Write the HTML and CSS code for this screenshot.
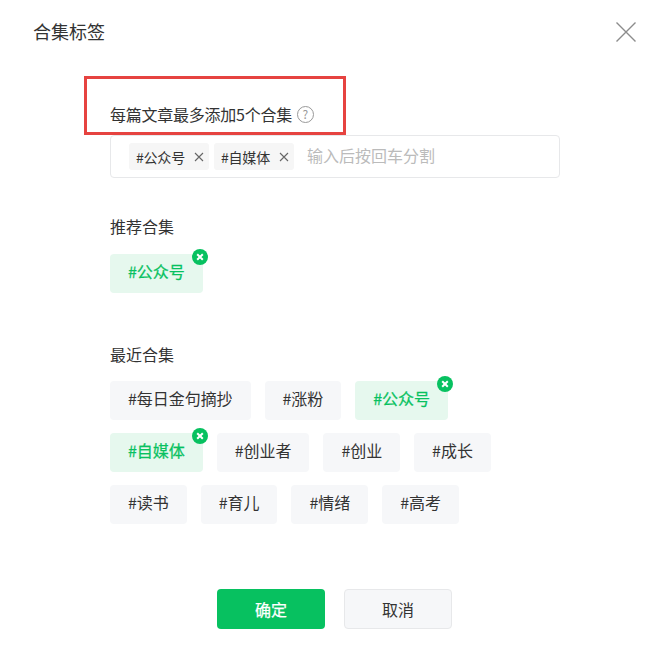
FILE: index.html
```html
<!DOCTYPE html>
<html lang="zh-CN">

<head>
    <meta charset="UTF-8">
    <title>合集标签</title>
    <link rel="stylesheet" href="styles.css">
</head>

<body>
    <div class="dialog">
        <div class="dialog-header">
            <span class="dialog-title">合集标签</span>
            <svg class="dialog-close" width="20" height="20" viewBox="0 0 20 20">
                <path d="M0.5 0.5L19.5 19.5M19.5 0.5L0.5 19.5" stroke="#8c8c8c" stroke-width="1.4" fill="none"/>
            </svg>
        </div>

        <div class="dialog-body">
            <div class="limit-row">
                <span class="limit-text">每篇文章最多添加5个合集</span>
                <span class="help-icon">?</span>
            </div>

            <div class="tag-input">
                <span class="chip">#公众号
                    <svg class="chip-remove" width="10" height="10" viewBox="0 0 10 10">
                        <path d="M1 1L9 9M9 1L1 9" stroke="#666" stroke-width="1.1" fill="none"/>
                    </svg>
                </span>
                <span class="chip">#自媒体
                    <svg class="chip-remove" width="10" height="10" viewBox="0 0 10 10">
                        <path d="M1 1L9 9M9 1L1 9" stroke="#666" stroke-width="1.1" fill="none"/>
                    </svg>
                </span>
                <span class="tag-input-placeholder">输入后按回车分割</span>
            </div>

            <div class="section-title section-recommend">推荐合集</div>
            <div class="tag-list">
                <span class="tag tag-active">#公众号
                    <svg class="tag-badge" width="16" height="16" viewBox="0 0 16 16">
                        <circle cx="8" cy="8" r="8" fill="#07c160"/>
                        <path d="M5.2 5.2L10.8 10.8M10.8 5.2L5.2 10.8" stroke="#fff" stroke-width="2" fill="none"/>
                    </svg>
                </span>
            </div>

            <div class="section-title section-recent">最近合集</div>
            <div class="tag-list">
                <span class="tag">#每日金句摘抄</span>
                <span class="tag">#涨粉</span>
                <span class="tag tag-active">#公众号
                    <svg class="tag-badge" width="16" height="16" viewBox="0 0 16 16">
                        <circle cx="8" cy="8" r="8" fill="#07c160"/>
                        <path d="M5.2 5.2L10.8 10.8M10.8 5.2L5.2 10.8" stroke="#fff" stroke-width="2" fill="none"/>
                    </svg>
                </span>
                <span class="tag tag-active">#自媒体
                    <svg class="tag-badge" width="16" height="16" viewBox="0 0 16 16">
                        <circle cx="8" cy="8" r="8" fill="#07c160"/>
                        <path d="M5.2 5.2L10.8 10.8M10.8 5.2L5.2 10.8" stroke="#fff" stroke-width="2" fill="none"/>
                    </svg>
                </span>
                <span class="tag">#创业者</span>
                <span class="tag">#创业</span>
                <span class="tag">#成长</span>
                <span class="tag">#读书</span>
                <span class="tag">#育儿</span>
                <span class="tag">#情绪</span>
                <span class="tag">#高考</span>
            </div>
        </div>

        <div class="dialog-footer">
            <span class="btn btn-primary">确定</span>
            <span class="btn btn-default">取消</span>
        </div>

        <div class="highlight-box"></div>
    </div>
</body>

</html>
```

FILE: styles.css
```css
body {
    margin: 0;
    background: #fff;
    color: #333;
    font-family: "Noto Sans CJK SC", "Noto Sans", sans-serif;
    font-size: 16px;
    line-height: 24px;
}

.dialog {
    position: relative;
    width: 653px;
    height: 657px;
    overflow: hidden;
}

.dialog-header {
    display: flex;
    justify-content: space-between;
    align-items: center;
    height: 24px;
    padding: 20px 17px 0 33px;
}

.dialog-title {
    align-self: flex-start;
    font-size: 18px;
    line-height: 22px;
}

.dialog-body {
    margin-left: 110px;
    width: 450px;
}

.limit-row {
    display: flex;
    align-items: center;
    margin-top: 58px;
}

.limit-text {
    letter-spacing: -0.25px;
}

.help-icon {
    display: flex;
    justify-content: center;
    align-items: center;
    box-sizing: border-box;
    width: 17px;
    height: 17px;
    margin-left: 5px;
    border: 1.3px solid #999;
    border-radius: 50%;
    color: #999;
    font-size: 12px;
    line-height: 14px;
}

.tag-input {
    display: flex;
    align-items: center;
    box-sizing: border-box;
    height: 43px;
    margin-top: 9px;
    padding-left: 18px;
    border: 1px solid #e7e8ea;
    border-radius: 4px;
}

.chip {
    display: flex;
    align-items: center;
    width: 80px;
    box-sizing: border-box;
    height: 27px;
    margin-right: 5px;
    padding: 0 5px 0 7px;
    background: #f6f6f6;
    border-radius: 3px;
    font-size: 14px;
    line-height: 24px;
    letter-spacing: -0.2px;
}

.chip-remove {
    margin-left: auto;
}

.tag-input-placeholder {
    margin-left: 8px;
    padding-bottom: 3px;
    color: #bbb;
}

.section-title {
    line-height: 24px;
}

.section-recommend {
    margin-top: 36px;
}

.section-recent {
    margin-top: 49px;
}

.tag-list {
    display: flex;
    flex-wrap: wrap;
    gap: 13px 14px;
    max-width: 420px;
    margin-top: 16px;
}

.section-recent + .tag-list {
    margin-top: 15px;
}

.tag {
    position: relative;
    height: 39px;
    padding: 0 18px;
    background: #f6f7f9;
    border-radius: 4px;
    line-height: 35px;
    letter-spacing: -0.05px;
}

.tag-active {
    background: #e6f8ee;
    color: #07c160;
    -webkit-text-stroke: 0.25px #07c160;
}

.tag-badge {
    position: absolute;
    top: -5px;
    right: -5px;
}

.dialog-footer {
    display: flex;
    gap: 19px;
    margin: 65px 0 0 217px;
}

.btn {
    box-sizing: border-box;
    width: 108px;
    height: 40px;
    border-radius: 4px;
    font-size: 16px;
    line-height: 40px;
    text-align: center;
}

.btn-primary {
    background: #07c160;
    color: #fff;
    -webkit-text-stroke: 0.25px #fff;
}

.btn-default {
    background: #f6f7f9;
    border: 1px solid #e7e8ea;
    line-height: 38px;
}

.highlight-box {
    position: absolute;
    top: 76px;
    left: 84px;
    box-sizing: border-box;
    width: 262px;
    height: 59px;
    border: 3px solid #e64340;
}
```
